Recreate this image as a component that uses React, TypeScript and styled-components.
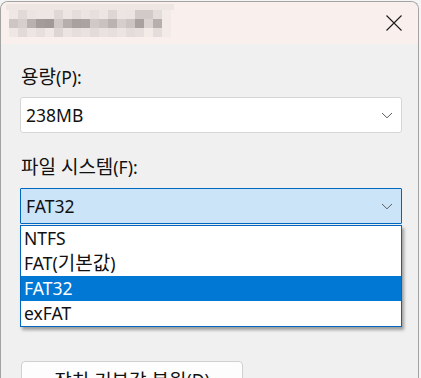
import styled, { createGlobalStyle } from 'styled-components';

const GlobalStyle = createGlobalStyle`
  html, body {
    margin: 0;
    padding: 0;
    background: #f4f4f4;
    font-family: "Noto Sans", "Noto Sans CJK KR", sans-serif;
    color: #111111;
  }
`;

// pixelated (redacted) title, 9px cells
const titleCells: string[][] = [
  ['#efe7e5', '#e0d9d7', '#ebe4e2', '#ede6e4', '#ede6e4', '#dfd8d6', '#ece5e3', '#e4dddb', '#ebe4e2', '#e6dfdd', '#ece5e3', '#ddd6d4', '#ece5e3', '#ebe4e2', '#d1cac8', '#d1cac8', '#e3dcda', '#f3ebe8'],
  ['#cdc6c4', '#d6cfcd', '#b8b1af', '#a39c9a', '#a09997', '#cfc8c6', '#b5aeac', '#a8a1a0', '#aaa3a1', '#d0c9c7', '#c9c2c0', '#bab3b1', '#d5cecc', '#cbc4c2', '#a8a19f', '#dad3d1', '#b6afad', '#f3ebe8'],
  ['#eee7e5', '#e1dad8', '#ece5e3', '#e6dfdd', '#efe8e6', '#dcd5d3', '#ebe4e2', '#e5dedc', '#e9e2e0', '#e2dbd9', '#e9e2e0', '#e6dfdd', '#ebe4e2', '#e3dcda', '#e6dfdd', '#f3ebe8', '#e4dddb', '#f3ebe8'],
];

export default function App() {
  return (
    <>
      <GlobalStyle />
      <Window>
        <TitleBar>
          <Redacted>
            <RedactedStrip />
            {titleCells.map((row, r) => (
              <CellRow key={r}>
                {row.map((c, i) => (
                  <Cell key={i} $color={c} />
                ))}
              </CellRow>
            ))}
          </Redacted>
          <CloseButton aria-label="닫기">
            <svg width="16" height="16" viewBox="0 0 16 16">
              <path d="M0.5 0.5 L15.5 15.5 M15.5 0.5 L0.5 15.5" stroke="#1a1a1a" strokeWidth="1.1" fill="none" />
            </svg>
          </CloseButton>
        </TitleBar>

        <Body>
          <Label>
            <Ko>용량</Ko>(P):
          </Label>
          <Combo>
            <span>238MB</span>
            <Chevron />
          </Combo>

          <Label $top={22}>
            <Ko>파일 시스템</Ko>(F):
          </Label>
          <ComboWrap>
            <Combo $focused>
              <span>FAT32</span>
              <Chevron />
            </Combo>
            <DropList>
              <Option>NTFS</Option>
              <Option>
                FAT(<Ko>기본값</Ko>)
              </Option>
              <Option $selected>FAT32</Option>
              <Option>exFAT</Option>
            </DropList>
          </ComboWrap>

          <ResetButton>
            <Ko>장치 기본값 복원</Ko>(D)
          </ResetButton>
        </Body>
      </Window>
    </>
  );
}

function Chevron() {
  return (
    <ChevronIcon width="12" height="7" viewBox="0 0 12 7">
      <path d="M1 1 L6 5.8 L11 1" stroke="#5f5f5f" strokeWidth="1" fill="none" />
    </ChevronIcon>
  );
}

const Window = styled.div`
  margin-top: 1px;
  width: 417px;
  height: 377px;
  border: 1px solid #a3a3a3;
  border-bottom: none;
  border-radius: 8px 8px 0 0;
  overflow: hidden;
  display: flex;
  flex-direction: column;
  background: #f0f0f0;
`;

const TitleBar = styled.div`
  height: 42px;
  flex: none;
  background: #f9f0ed;
  display: flex;
  align-items: flex-start;
  justify-content: space-between;
  padding: 0 16px 0 5px;
`;

const Redacted = styled.div`
  padding-top: 2px;
  display: flex;
  flex-direction: column;
`;

const RedactedStrip = styled.div`
  width: 168px;
  height: 6px;
  background: #eee6e3;
`;

const CellRow = styled.div`
  display: flex;
  padding-left: 3px;
`;

const Cell = styled.div<{ $color: string }>`
  width: 9px;
  height: 9px;
  background: ${(p) => p.$color};
`;

const CloseButton = styled.div`
  margin-top: 13px;
  width: 16px;
  height: 16px;
  display: flex;
`;

const Body = styled.div`
  flex: 1;
  padding: 21px 16px 0 19px;
  display: flex;
  flex-direction: column;
  align-items: flex-start;
`;

// Hangul runs a little larger, as Malgun Gothic does next to Segoe UI
const Ko = styled.span`
  font-size: 19px;
`;

const Label = styled.div<{ $top?: number }>`
  margin-top: ${(p) => p.$top ?? 0}px;
  font-size: 17.5px;
  line-height: 24px;
  height: 24px;
  padding-left: 1px;
`;

const ComboWrap = styled.div`
  position: relative;
  align-self: stretch;
  display: flex;
  flex-direction: column;
`;

const Combo = styled.div<{ $focused?: boolean }>`
  margin-top: 8px;
  align-self: stretch;
  box-sizing: border-box;
  height: 36px;
  display: flex;
  align-items: center;
  justify-content: space-between;
  padding: 0 8px 0 5px;
  font-size: 17.5px;
  border: 1px solid ${(p) => (p.$focused ? '#0067c0' : '#d6d6d6')};
  border-radius: ${(p) => (p.$focused ? '1px' : '3px')};
  background: ${(p) => (p.$focused ? '#cce4f7' : '#ffffff')};
  ${ComboWrap} > & {
    margin-top: 9px;
  }
`;

const ChevronIcon = styled.svg`
  display: block;
  margin-top: 1px;
`;

const DropList = styled.div`
  position: absolute;
  top: 46px;
  left: 0;
  right: 0;
  z-index: 2;
  border: 1px solid #0067c0;
  background: #ffffff;
  box-shadow: 2px 3px 3px rgba(0, 0, 0, 0.35);
`;

const Option = styled.div<{ $selected?: boolean }>`
  height: 25px;
  line-height: 25px;
  padding-left: 3px;
  font-size: 17.5px;
  color: ${(p) => (p.$selected ? '#ffffff' : '#111111')};
  background: ${(p) => (p.$selected ? '#0078d4' : 'transparent')};
`;

const ResetButton = styled.div`
  margin-top: 137px;
  margin-left: 1px;
  box-sizing: border-box;
  width: 222px;
  height: 38px;
  flex: none;
  display: flex;
  align-items: center;
  justify-content: center;
  font-size: 17.5px;
  background: #fdfdfd;
  border: 1px solid #d0d0d0;
  border-radius: 4px;
`;
